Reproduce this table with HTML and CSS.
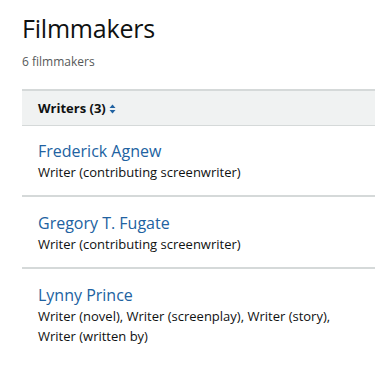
FILE: index.html
```html
<!DOCTYPE html>
<html lang="en">
<head>
<meta charset="utf-8">
<title>Filmmakers</title>
<link rel="stylesheet" href="styles.css">
</head>
<body>
<main class="page">
  <h1 class="title">Filmmakers</h1>
  <p class="count">6 filmmakers</p>
  <section class="group">
    <div class="group-head">
      <span class="group-label">Writers (3)</span>
      <svg class="sort" width="7" height="10" viewBox="0 0 7 10" aria-hidden="true">
        <path d="M3.5 0.5 L6.5 4 L0.5 4 Z" fill="#2162a1"/>
        <path d="M3.5 9.5 L6.5 6 L0.5 6 Z" fill="#2162a1"/>
      </svg>
    </div>
    <ul class="list">
      <li class="item">
        <a class="name" href="#">Frederick Agnew</a>
        <p class="role">Writer (contributing screenwriter)</p>
      </li>
      <li class="item">
        <a class="name" href="#">Gregory T. Fugate</a>
        <p class="role">Writer (contributing screenwriter)</p>
      </li>
      <li class="item">
        <a class="name" href="#">Lynny Prince</a>
        <p class="role">Writer (novel), Writer (screenplay), Writer (story), Writer (written by)</p>
      </li>
    </ul>
  </section>
</main>
</body>
</html>
```

FILE: styles.css
```css
* { box-sizing: border-box; }
html, body { margin: 0; padding: 0; background: #fff; }
body {
  font-family: "Open Sans", "Noto Sans", "Liberation Sans", sans-serif;
  color: #0f1111;
}
.page {
  padding: 11px 0 0 22px;
}
.title {
  margin: 0;
  font-size: 25px;
  font-weight: 400;
  line-height: 34px;
  letter-spacing: -0.2px;
}
.count {
  margin: 9px 0 0;
  font-size: 12px;
  line-height: 16px;
  color: #565959;
}
.group {
  margin-top: 19px;
}
.group-head {
  display: flex;
  align-items: center;
  gap: 3px;
  height: 37px;
  padding-left: 16px;
  background: #f0f2f2;
  border-top: 2px solid #d5d9d9;
  border-bottom: 1px solid #d5d9d9;
}
.group-label {
  font-size: 13px;
  font-weight: 700;
}
.sort { display: block; margin-top: 1px; }
.list {
  list-style: none;
  margin: 0;
  padding: 0;
}
.item {
  padding: 15px 16px 13px;
  border-bottom: 2px solid #d5d9d9;
}
.item + .item { padding-top: 16px; }
.item:last-child { border-bottom: none; }
.name {
  display: block;
  font-size: 16px;
  line-height: 20px;
  color: #2162a1;
  text-decoration: none;
}
.role {
  margin: 1px 0 0;
  font-size: 13px;
  line-height: 20px;
  padding-right: 20px;
}
```
